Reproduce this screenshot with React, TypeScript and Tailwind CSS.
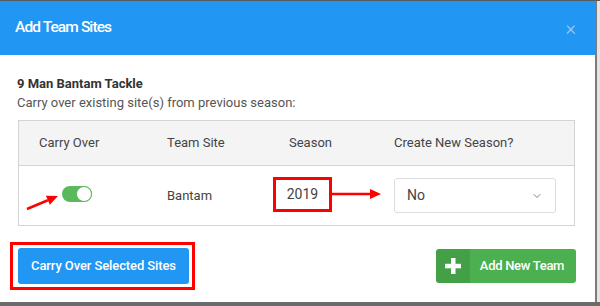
import React from "react";
import { ChevronDown } from "lucide-react";

/* --- ANNOTATION ARROWS --- */
function Arrow({ x1, y1, x2, y2 }: { x1: number; y1: number; x2: number; y2: number }) {
    const a = Math.atan2(y2 - y1, x2 - x1);
    const len = 11;
    const w = 5;
    const bx = x2 - Math.cos(a) * len;
    const by = y2 - Math.sin(a) * len;
    const px = -Math.sin(a) * w;
    const py = Math.cos(a) * w;
    return (
        <g>
            <line x1={x1} y1={y1} x2={bx} y2={by} stroke="#f00" strokeWidth="2.5" />
            <polygon points={`${x2},${y2} ${bx + px},${by + py} ${bx - px},${by - py}`} fill="#f00" />
        </g>
    );
}

export default function App() {
    return (
        <div className="w-[600px] h-[306px] flex flex-col bg-[#6b6b6b] font-['Roboto',sans-serif] overflow-hidden relative">
            <div className="h-px bg-[#5a5a5a]" />
            <div className="flex h-[301px]">
                {/* Modal */}
                <div className="w-[595px] bg-white flex flex-col">
                    <header className="h-[54px] bg-[#2196f3] flex items-center justify-between pl-[15px] pr-[19px]">
                        <h2 className="text-white text-[15.5px] font-medium tracking-[-0.9px]">Add Team Sites</h2>
                        <span className="text-[#9fd0f9] text-[20px] leading-none font-light">×</span>
                    </header>

                    <div className="px-[18px] pt-[21px] flex flex-col">
                        <div className="text-[13px] font-bold text-[#333] leading-[16px] -ml-px">9 Man Bantam Tackle</div>
                        <div className="text-[13px] text-[#555] leading-[16px] mt-[3px] -ml-px">Carry over existing site(s) from previous season:</div>

                        {/* Table */}
                        <div className="mt-[9px] w-[557px] border border-[#d4d4d4] text-[13px]">
                            <div className="h-[45px] bg-[#f4f4f4] border-b border-[#d4d4d4] grid grid-cols-[128px_122px_105px_200px] items-center text-[#444]">
                                <div className="pl-[20px]">Carry Over</div>
                                <div className="pl-[20px]">Team Site</div>
                                <div className="pl-[20px]">Season</div>
                                <div className="pl-[20px]">Create New Season?</div>
                            </div>
                            <div className="h-[59px] grid grid-cols-[128px_122px_105px_200px] items-center text-[#444]">
                                <div className="pl-[43px]">
                                    <div className="w-[30px] h-[16px] rounded-full bg-[#5cb85c] flex items-center justify-end -mt-[4px]">
                                        <div className="w-[16px] h-[16px] rounded-full bg-white border border-[#5cb85c]" />
                                    </div>
                                </div>
                                <div className="pl-[20px]">Bantam</div>
                                <div className="pl-[4px]">
                                    <div className="w-[59px] h-[35px] border-[3px] border-[#f00] flex items-center justify-center text-[14px] -mt-[2px]">2019</div>
                                </div>
                                <div className="pl-[20px]">
                                    <div className="w-[162px] h-[35px] border border-[#ddd] rounded-[3px] flex items-center justify-between pl-[12px] pr-[12px] text-[14px]">
                                        <span>No</span>
                                        <ChevronDown size={12} strokeWidth={1.5} className="text-[#555]" />
                                    </div>
                                </div>
                            </div>
                        </div>

                        {/* Footer buttons */}
                        <div className="flex items-center justify-between mt-[16px] -ml-[8px]">
                            <div className="border-[3px] border-[#f00] pl-[5px] pr-[3px] py-[3px]">
                                <button className="h-[36px] w-[171px] bg-[#2196f3] rounded-[3px] text-white text-[13px] font-medium tracking-[-0.1px]">
                                    Carry Over Selected Sites
                                </button>
                            </div>
                            <button className="h-[34px] w-[140px] flex rounded-[3px] overflow-hidden text-white text-[13px] font-medium mr-[1px]">
                                <span className="w-[34px] h-full bg-[#43a047] flex items-center justify-center">
                                    <svg width="16" height="16" viewBox="0 0 16 16">
                                        <rect x="6" y="0" width="4.5" height="16" fill="#fff" />
                                        <rect x="0" y="5.8" width="16" height="4.5" fill="#fff" />
                                    </svg>
                                </span>
                                <span className="flex-1 h-full bg-[#4caf50] flex items-center justify-center pr-[2px] tracking-[-0.3px]">Add New Team</span>
                            </button>
                        </div>
                    </div>
                </div>
                <div className="flex-1 bg-[#e4e4e4] border-l-2 border-[#7c7c7c]" />
            </div>

            {/* Red annotation arrows */}
            <svg className="absolute left-0 top-0 pointer-events-none" width="600" height="306">
                <Arrow x1={27} y1={209} x2={58} y2={196} />
                <Arrow x1={332} y1={194} x2={381} y2={194} />
            </svg>
        </div>
    );
}
